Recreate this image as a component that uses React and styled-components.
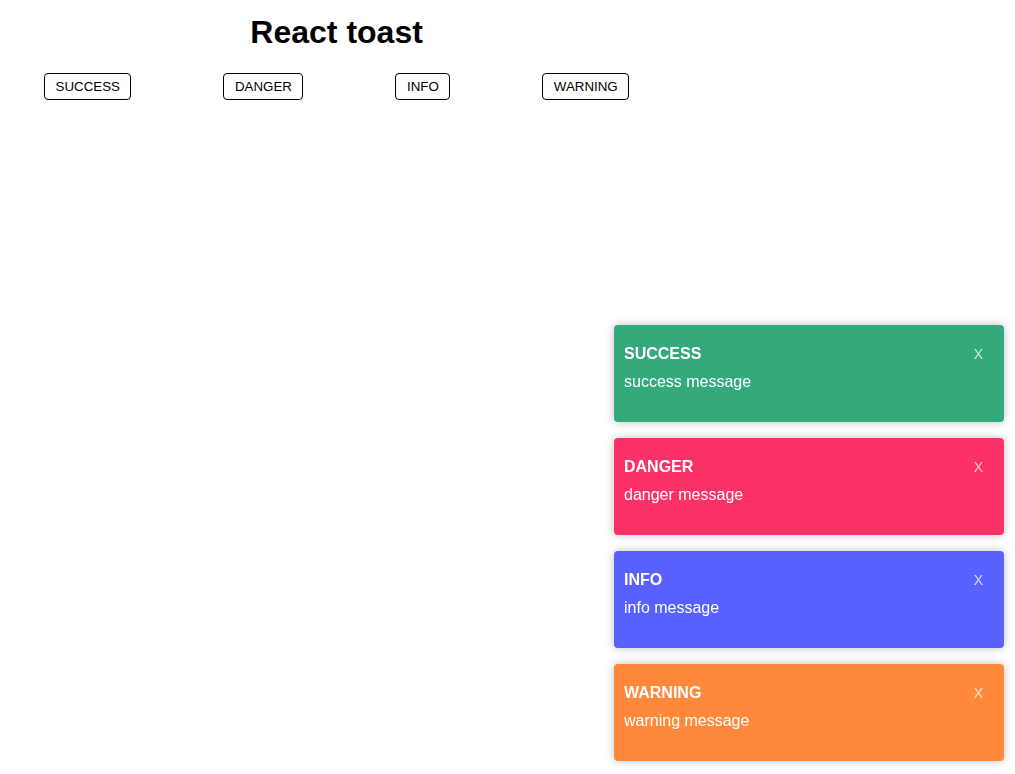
import React, { useState } from 'react';
import styled, { createGlobalStyle } from 'styled-components';

const GlobalStyle = createGlobalStyle`
  html, body {
    margin: 0;
    padding: 0;
    background: #ffffff;
    font-family: "Liberation Sans", Arial, sans-serif;
  }
`;

const Page = styled.div`
  padding: 14px 0 0 44px;
`;

const Header = styled.div`
  display: inline-flex;
  flex-direction: column;
  align-items: center;
`;

const Title = styled.h1`
  margin: 0 0 23px;
  font-size: 32px;
  line-height: 36px;
  font-weight: 700;
  color: #000;
`;

const ButtonRow = styled.div`
  display: flex;
  gap: 92px;
`;

const TriggerButton = styled.button`
  font-family: "Liberation Sans", Arial, sans-serif;
  font-size: 13.33px;
  line-height: 15px;
  padding: 5px 10.5px;
  background: #fff;
  color: #000;
  border: 1px solid #000;
  border-radius: 4px;
  cursor: pointer;
`;

const ToastList = styled.div`
  position: fixed;
  right: 11px;
  bottom: 13px;
  width: 390px;
  display: flex;
  flex-direction: column;
  gap: 16px;
`;

const Toast = styled.div`
  background: ${(p) => p.$color};
  color: #fff;
  border-radius: 4px;
  padding: 20px 10px 31px;
  box-shadow: 0 0 10px rgba(0, 0, 0, 0.25);
`;

const ToastHead = styled.div`
  display: flex;
  justify-content: space-between;
  align-items: baseline;
`;

const ToastTitle = styled.div`
  font-size: 16px;
  line-height: 18px;
  font-weight: 700;
`;

const CloseButton = styled.button`
  font-family: "Liberation Sans", Arial, sans-serif;
  font-size: 14px;
  line-height: 18px;
  background: transparent;
  border: none;
  padding: 0;
  margin-right: 11px;
  color: rgba(255, 255, 255, 0.75);
  cursor: pointer;
`;

const ToastMessage = styled.div`
  margin-top: 10px;
  font-size: 16px;
  line-height: 18px;
`;

const types = [
  { key: 'success', label: 'SUCCESS', color: '#34aa7a' },
  { key: 'danger', label: 'DANGER', color: '#fc3167' },
  { key: 'info', label: 'INFO', color: '#5860ff' },
  { key: 'warning', label: 'WARNING', color: '#ff883a' },
];

const App = () => {
  const [toasts, setToasts] = useState(types.map((t, i) => ({ ...t, id: i })));

  const addToast = (type) => {
    setToasts((list) => [...list, { ...type, id: Date.now() }]);
  };

  const removeToast = (id) => {
    setToasts((list) => list.filter((t) => t.id !== id));
  };

  return (
    <>
      <GlobalStyle />
      <Page>
        <Header>
          <Title>React toast</Title>
          <ButtonRow>
            {types.map((t) => (
              <TriggerButton key={t.key} onClick={() => addToast(t)}>
                {t.label}
              </TriggerButton>
            ))}
          </ButtonRow>
        </Header>
      </Page>

      <ToastList>
        {toasts.map((t) => (
          <Toast key={t.id} $color={t.color}>
            <ToastHead>
              <ToastTitle>{t.label}</ToastTitle>
              <CloseButton onClick={() => removeToast(t.id)}>X</CloseButton>
            </ToastHead>
            <ToastMessage>{t.key} message</ToastMessage>
          </Toast>
        ))}
      </ToastList>
    </>
  );
};

export default App;
